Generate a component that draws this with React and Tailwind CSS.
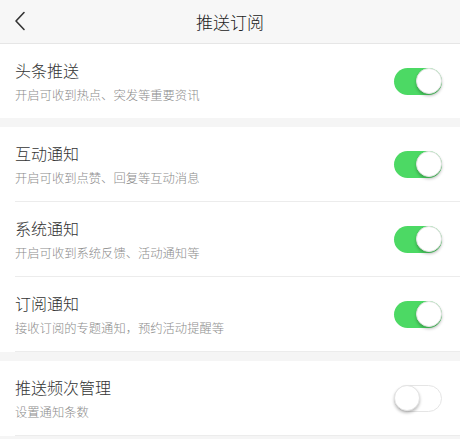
import React, { useState } from 'react';

const font = { fontFamily: '"Noto Sans CJK SC", "Noto Sans", sans-serif' };

const Toggle = ({ on, onChange }) => (
  <button
    type="button"
    onClick={onChange}
    className={`relative w-[48px] h-[27px] rounded-full shrink-0 transition-colors ${on ? 'bg-[#4cd964]' : 'bg-white border border-[#e5e5e5]'}`}
  >
    <span
      className={`absolute top-1/2 -translate-y-1/2 w-[26px] h-[26px] rounded-full bg-white shadow-[0_2px_3px_rgba(0,0,0,0.25)] border border-[#e3e3e3] ${on ? 'right-0' : '-left-px'}`}
    />
  </button>
);

const Row = ({ title, desc, on, onChange, divider }) => (
  <div className="pl-[15px]">
    <div className="h-[74px] flex items-center justify-between pr-[18px]">
      <div>
        <div className="text-[16px] leading-[20px] font-light text-[#333]">{title}</div>
        <div className="mt-[7px] text-[12.3px] leading-[16px] font-light text-[#8c8c8c]">{desc}</div>
      </div>
      <Toggle on={on} onChange={onChange} />
    </div>
    {divider && <div className="h-px bg-[#ececec]" />}
  </div>
);

const sections = [
  [{ key: 'top', title: '头条推送', desc: '开启可收到热点、突发等重要资讯' }],
  [
    { key: 'interact', title: '互动通知', desc: '开启可收到点赞、回复等互动消息' },
    { key: 'system', title: '系统通知', desc: '开启可收到系统反馈、活动通知等' },
    { key: 'sub', title: '订阅通知', desc: '接收订阅的专题通知，预约活动提醒等' },
  ],
  [{ key: 'freq', title: '推送频次管理', desc: '设置通知条数' }],
];

export default function App() {
  const [state, setState] = useState({ top: true, interact: true, system: true, sub: true, freq: false });
  const flip = (k) => setState({ ...state, [k]: !state[k] });

  return (
    <div className="w-[460px] h-[439px] overflow-hidden bg-[#f5f5f5]" style={font}>
      {/* header */}
      <div className="relative h-[44px] flex items-center justify-center bg-[#f7f7f7] border-b border-[#e6e6e6]">
        <button type="button" className="absolute left-[13px] top-[11px]">
          <svg width="14" height="20" viewBox="0 0 14 20" fill="none">
            <path d="M11 1.5 L3 10 L11 18.5" stroke="#333" strokeWidth="1.6" strokeLinecap="round" strokeLinejoin="round" />
          </svg>
        </button>
        <h1 className="text-[17px] text-[#222] font-light leading-none">推送订阅</h1>
      </div>

      <div className="flex flex-col gap-[9px]">
        {sections.map((rows, i) => (
          <div key={i} className="bg-white">
            {rows.map((r, j) => (
              <Row
                key={r.key}
                title={r.title}
                desc={r.desc}
                on={state[r.key]}
                onChange={() => flip(r.key)}
                divider={i > 0 || j < rows.length - 1}
              />
            ))}
          </div>
        ))}
      </div>
    </div>
  );
}
